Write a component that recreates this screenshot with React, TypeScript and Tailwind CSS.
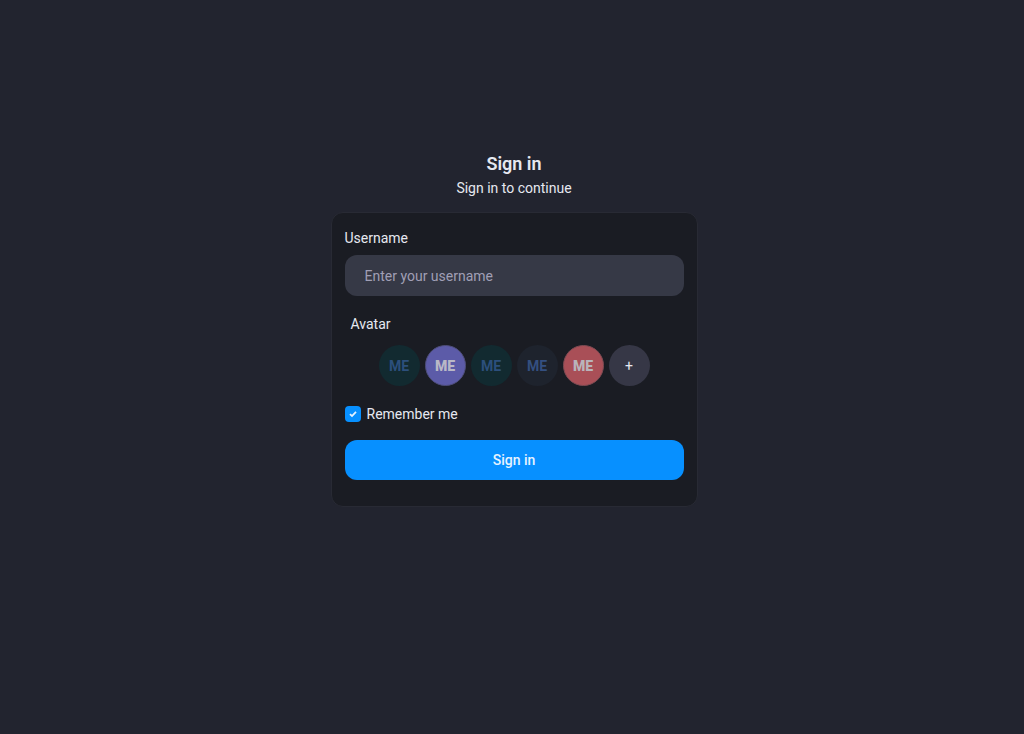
import React, { useState } from "react"

interface Avatar {
  id: number
  label: string
  className: string
}

const avatars: Avatar[] = [
  { id: 1, label: "Teal", className: "font-bold bg-[#122a30] text-[#2c4f7c]" },
  { id: 2, label: "Purple", className: "font-black bg-[#5c5ba8] text-[#b9b8c6] border border-[#4d4d78]" },
  { id: 3, label: "Green", className: "font-bold bg-[#122a30] text-[#2c4f7c]" },
  { id: 4, label: "Slate", className: "font-bold bg-[#1e232d] text-[#344f80]" },
  { id: 5, label: "Red", className: "font-black bg-[#a94f57] text-[#b9b4bb] border border-[#7d4a52]" },
]

const CheckIcon = () => (
  <svg
    viewBox="0 0 16 16"
    className="pointer-events-none col-start-1 row-start-1 size-4"
    fill="none"
    stroke="#e6f3ff"
    strokeWidth="1.8"
    aria-hidden="true"
  >
    <path d="M5 8.2l2 1.9 4-4.2" />
  </svg>
)

const App = () => {
  const [username, setUsername] = useState("")
  const [avatar, setAvatar] = useState<number | null>(null)
  const [remember, setRemember] = useState(true)

  return (
    <main className="flex min-h-screen flex-col items-center bg-[#22242f] pt-38 pl-1 font-['Roboto',sans-serif] text-sm text-[#e6e8f0]">
      <h1 className="text-lg leading-6 font-semibold">Sign in</h1>
      <p className="leading-6">Sign in to continue</p>

      <form
        className="mt-3 w-full max-w-[367px] rounded-xl border border-[#282a34] bg-[#1a1c23] px-3.25 pt-3.25 pb-6.5"
        onSubmit={(e) => e.preventDefault()}
      >
        <label htmlFor="username" className="block leading-6">
          Username
        </label>
        <input
          id="username"
          type="text"
          placeholder="Enter your username"
          value={username}
          onChange={(e) => setUsername(e.target.value)}
          className="mt-1.25 block h-[41px] w-full rounded-xl bg-[#363946] px-5 placeholder:text-[#a09fb5] focus:outline-none"
        />

        <p className="mt-4 pl-1.5 leading-6">Avatar</p>
        <div className="mt-2.25 flex justify-center gap-1.25">
          {avatars.map((item) => (
            <button
              key={item.id}
              type="button"
              aria-label={item.label}
              aria-pressed={avatar === item.id}
              onClick={() => setAvatar(item.id)}
              className={`size-[41px] rounded-full ${item.className}`}
            >
              ME
            </button>
          ))}
          <button
            type="button"
            aria-label="Add avatar"
            className="size-[41px] rounded-full bg-[#363746]"
          >
            +
          </button>
        </div>

        <div className="mt-4 flex items-center gap-1.5 leading-6">
          <span className="grid">
            <input
              id="remember"
              type="checkbox"
              checked={remember}
              onChange={(e) => setRemember(e.target.checked)}
              className="col-start-1 row-start-1 size-4 appearance-none rounded bg-[#363946] checked:bg-[#0790ff]"
            />
            {remember && <CheckIcon />}
          </span>
          <label htmlFor="remember">Remember me</label>
        </div>

        <button
          type="submit"
          className="mt-3.5 h-10 w-full rounded-xl bg-[#0790ff] font-medium text-[#e6f3ff] hover:bg-[#0790ff]/90"
        >
          Sign in
        </button>
      </form>
    </main>
  )
}

export default App
